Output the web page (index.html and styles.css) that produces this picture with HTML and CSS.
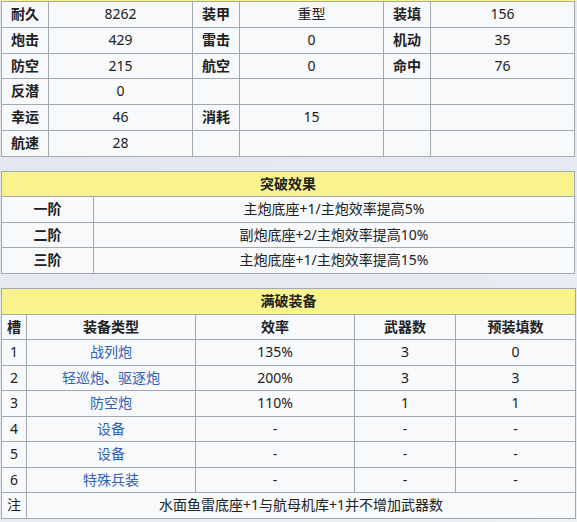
FILE: index.html
```html
<!DOCTYPE html>
<html lang="zh-CN">
<head>
<meta charset="utf-8">
<title>舰船属性</title>
<link rel="stylesheet" href="styles.css">
</head>
<body>
<div class="page">
  <div class="cut-header"></div>
  <table class="wt stats">
    <colgroup>
      <col class="c-l"><col class="c-v"><col class="c-l"><col class="c-v"><col class="c-l"><col class="c-v">
    </colgroup>
    <tbody>
      <tr><th>耐久</th><td>8262</td><th>装甲</th><td>重型</td><th>装填</th><td>156</td></tr>
      <tr><th>炮击</th><td>429</td><th>雷击</th><td>0</td><th>机动</th><td>35</td></tr>
      <tr><th>防空</th><td>215</td><th>航空</th><td>0</td><th>命中</th><td>76</td></tr>
      <tr><th>反潜</th><td>0</td><th></th><td></td><th></th><td></td></tr>
      <tr><th>幸运</th><td>46</td><th>消耗</th><td>15</td><th></th><td></td></tr>
      <tr><th>航速</th><td>28</td><th></th><td></td><th></th><td></td></tr>
    </tbody>
  </table>

  <table class="wt breaks">
    <colgroup><col class="b1"><col class="b2"></colgroup>
    <tbody>
      <tr><th class="hd" colspan="2">突破效果</th></tr>
      <tr><th>一阶</th><td>主炮底座+1/主炮效率提高5%</td></tr>
      <tr><th>二阶</th><td>副炮底座+2/主炮效率提高10%</td></tr>
      <tr><th>三阶</th><td>主炮底座+1/主炮效率提高15%</td></tr>
    </tbody>
  </table>

  <table class="wt equip">
    <colgroup><col class="e1"><col class="e2"><col class="e3"><col class="e4"><col class="e5"></colgroup>
    <tbody>
      <tr><th class="hd" colspan="5">满破装备</th></tr>
      <tr><th>槽</th><th>装备类型</th><th>效率</th><th>武器数</th><th>预装填数</th></tr>
      <tr><td>1</td><td><a href="#">战列炮</a></td><td>135%</td><td>3</td><td>0</td></tr>
      <tr><td>2</td><td><a href="#">轻巡炮</a>、<a href="#">驱逐炮</a></td><td>200%</td><td>3</td><td>3</td></tr>
      <tr><td>3</td><td><a href="#">防空炮</a></td><td>110%</td><td>1</td><td>1</td></tr>
      <tr><td>4</td><td><a href="#">设备</a></td><td>-</td><td>-</td><td>-</td></tr>
      <tr><td>5</td><td><a href="#">设备</a></td><td>-</td><td>-</td><td>-</td></tr>
      <tr><td>6</td><td><a href="#">特殊兵装</a></td><td>-</td><td>-</td><td>-</td></tr>
      <tr><td>注</td><td colspan="4">水面鱼雷底座+1与航母机库+1并不增加武器数</td></tr>
    </tbody>
  </table>
</div>
</body>
</html>
```

FILE: styles.css
```css
html, body {
  margin: 0;
  padding: 0;
}
body {
  background: linear-gradient(160deg, #e2e7ef 0%, #e6ebf2 60%, #edf0f5 100%);
  font-family: "Noto Sans", "Noto Sans CJK SC", sans-serif;
  font-size: 14px;
  color: #202122;
  width: 577px;
  height: 522px;
  overflow: hidden;
}
.page {
  display: flex;
  flex-direction: column;
  padding-left: 1px;
}
.cut-header {
  width: 574px;
  height: 1px;
  background: #f8f38e;
}
.wt {
  border-collapse: collapse;
  table-layout: fixed;
  width: 574px;
  background: #f8f9fa;
  border: 1px solid #a2a9b1;
}
.wt th, .wt td {
  border: 1px solid #a2a9b1;
  padding: 2px 2px;
  text-align: center;
  vertical-align: middle;
  white-space: nowrap;
  overflow: hidden;
}
.wt th {
  font-weight: bold;
}
.wt a {
  color: #3060b8;
  text-decoration: none;
}
.wt .hd {
  background: #f8f38e;
}

.stats th, .stats td {
  line-height: 20.83px;
}
.stats .c-l { width: 47px; }
.stats .c-v { width: 144px; }

.breaks {
  margin-top: 14px;
}
.breaks th, .breaks td {
  line-height: 20.5px;
}
.breaks .b1 { width: 92px; }

.equip {
  margin-top: 14px;
}
.equip th, .equip td {
  line-height: 20.55px;
}
.equip .e1 { width: 25px; }
.equip .e2 { width: 169px; }
.equip .e3 { width: 159px; }
.equip .e4 { width: 101px; }
.equip .e5 { width: 120px; }
```
